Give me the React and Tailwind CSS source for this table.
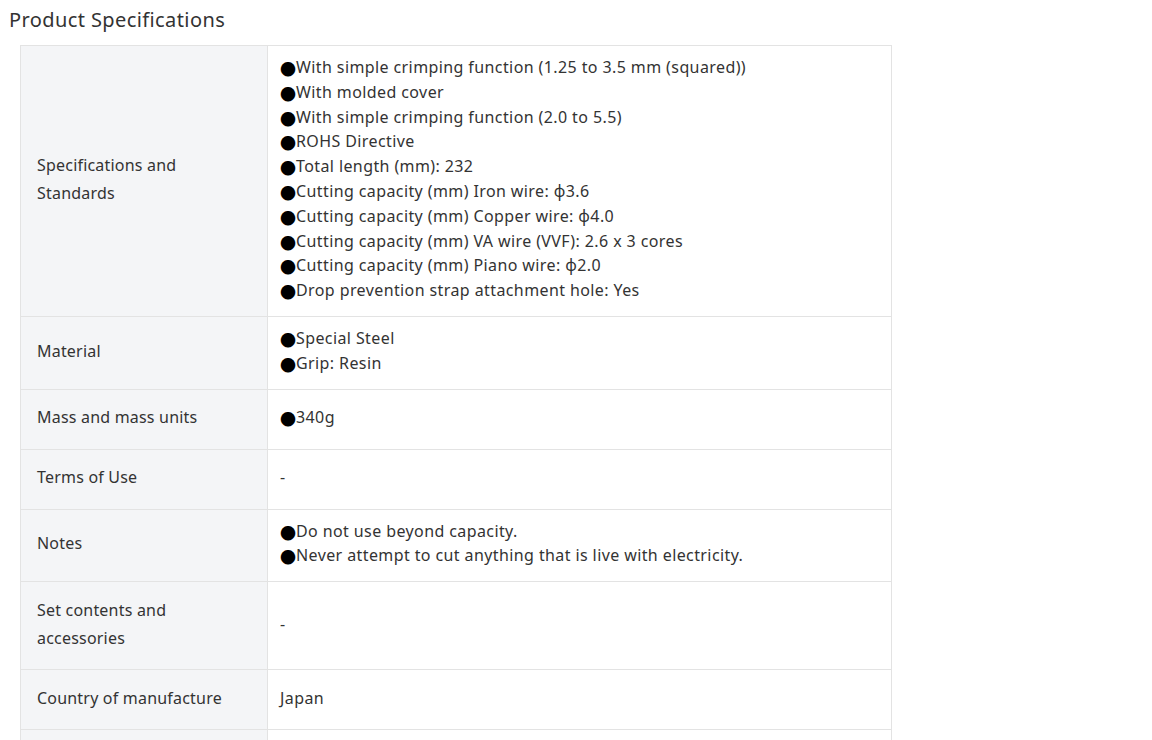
import React from 'react';

const rows = [
  {
    label: 'Specifications and Standards',
    items: [
      'With simple crimping function (1.25 to 3.5 mm (squared))',
      'With molded cover',
      'With simple crimping function (2.0 to 5.5)',
      'ROHS Directive',
      'Total length (mm): 232',
      'Cutting capacity (mm) Iron wire: φ3.6',
      'Cutting capacity (mm) Copper wire: φ4.0',
      'Cutting capacity (mm) VA wire (VVF): 2.6 x 3 cores',
      'Cutting capacity (mm) Piano wire: φ2.0',
      'Drop prevention strap attachment hole: Yes',
    ],
  },
  { label: 'Material', items: ['Special Steel', 'Grip: Resin'] },
  { label: 'Mass and mass units', items: ['340g'] },
  { label: 'Terms of Use', text: '-' },
  {
    label: 'Notes',
    items: ['Do not use beyond capacity.', 'Never attempt to cut anything that is live with electricity.'],
  },
  { label: 'Set contents and accessories', text: '-' },
  { label: 'Country of manufacture', text: 'Japan' },
  { label: '', text: '' },
];

export default function App() {
  return (
    <div
      className="bg-white text-[#333] h-[740px] overflow-hidden tracking-[0.4px]"
      style={{ fontFamily: '"Noto Sans", "Noto Sans CJK JP", sans-serif' }}
    >
      <h2 className="pl-[9px] pt-[5px] text-[20px] leading-[30px] font-normal">Product Specifications</h2>
      <table className="ml-5 mt-[10px] w-[872px] border-collapse text-[16px]">
        <tbody>
          {rows.map((r, i) => (
            <tr key={i}>
              <th className="w-[247px] bg-[#f4f5f7] border border-[#e3e3e3] pl-4 pr-6 pt-[13.5px] pb-[17.5px] text-left font-normal leading-[28px] tracking-[0.2px] align-middle">
                {r.label}
              </th>
              <td className="border border-[#e3e3e3] pl-3 pr-3 pt-[9px] pb-[13px] leading-[24.8px] align-middle">
                {r.items
                  ? r.items.map((it, j) => (
                      <div key={j} className="h-[24.8px] whitespace-nowrap">
                        <span className="inline-block w-[16px] text-[16px] leading-[16px] tracking-normal text-black align-[-2px]" style={{ fontFamily: '"Noto Sans CJK JP", sans-serif' }}>●</span>
                        {it}
                      </div>
                    ))
                  : <div className="leading-[28px]">{r.text}</div>}
              </td>
            </tr>
          ))}
        </tbody>
      </table>
    </div>
  );
}
